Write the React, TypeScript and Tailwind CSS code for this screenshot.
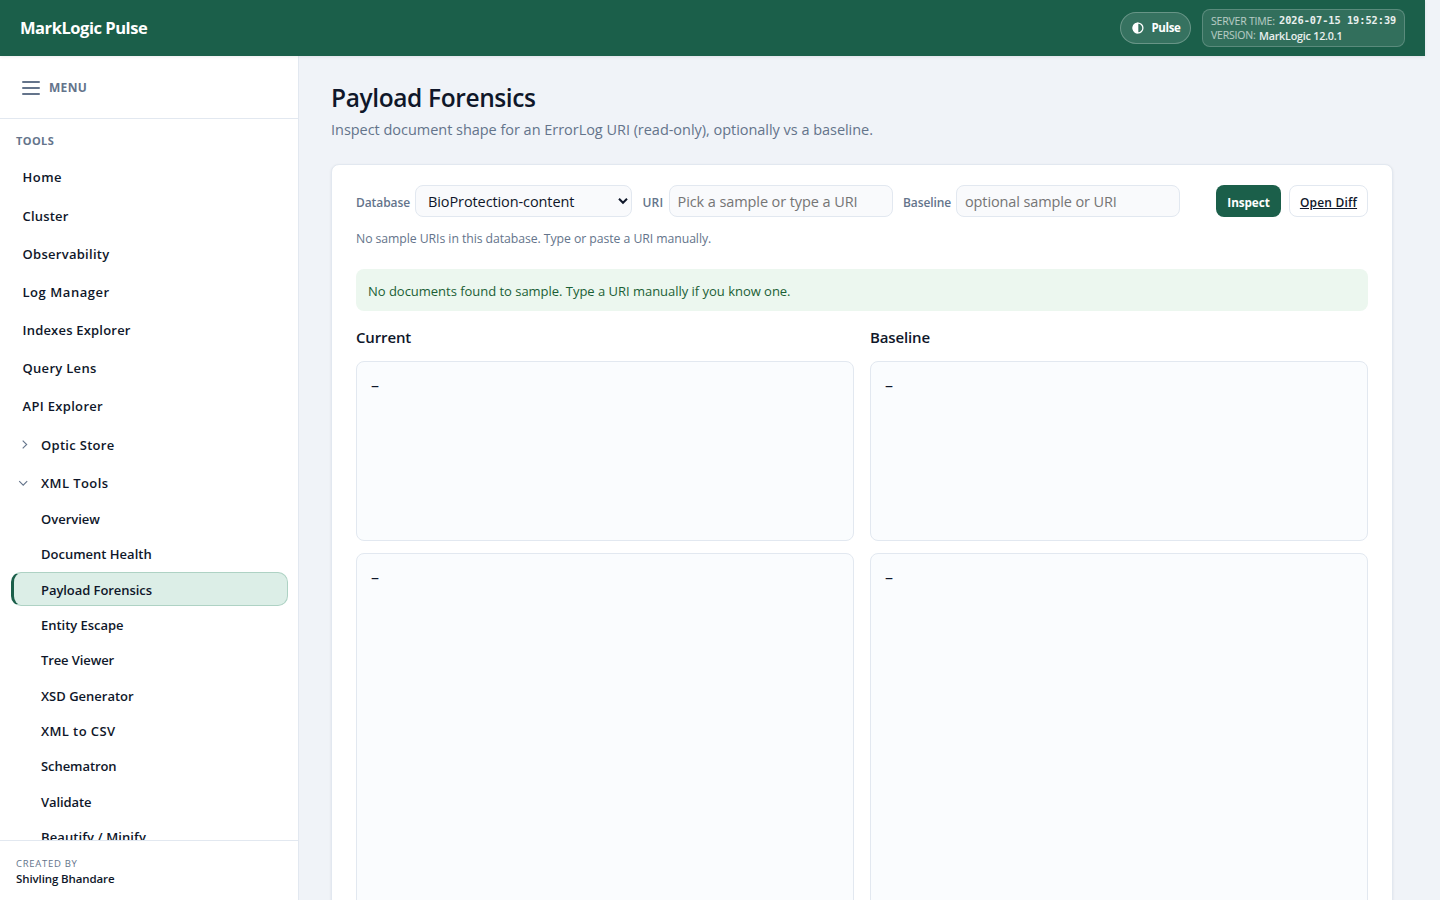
const topItems: [string, string][] = [
  ["Home", "tracking-[0.47px]"],
  ["Cluster", "tracking-[0.2px]"],
  ["Observability", "tracking-[0.28px]"],
  ["Log Manager", "tracking-[0.55px]"],
  ["Indexes Explorer", "tracking-[0.2px]"],
  ["Query Lens", "tracking-[0.3px]"],
  ["API Explorer", "tracking-[0.32px]"],
];

const xmlTools: [string, string][] = [
  ["Overview", ""],
  ["Document Health", ""],
  ["Payload Forensics", "tracking-[-0.06px]"],
  ["Entity Escape", "tracking-[-0.03px]"],
  ["Tree Viewer", "tracking-[-0.11px]"],
  ["XSD Generator", ""],
  ["XML to CSV", "tracking-[0.4px]"],
  ["Schematron", "tracking-[-0.07px]"],
  ["Validate", "tracking-[-0.08px]"],
  ["Beautify / Minify", "tracking-[0.1px]"],
];

function Header() {
  return (
    <header className="relative z-10 flex h-14 w-[1425px] shrink-0 items-center justify-between bg-[#1b5f4a] px-5 text-white shadow-[0_1px_3px_rgba(15,23,42,0.08)]">
      <div className="text-[16.5px] font-bold tracking-[-0.46px]">MarkLogic Pulse</div>
      <div className="flex items-center gap-[11px]">
        <button className="flex h-8 w-[71px] items-center rounded-full border border-white/25 bg-white/12 pl-[11px] text-[11.5px] font-bold tracking-[-0.38px]">
          <svg width="12" height="12" viewBox="0 0 12 12" className="mr-[7.5px] shrink-0">
            <circle cx="6" cy="6" r="4.9" fill="none" stroke="white" strokeWidth="1.3" />
            <path d="M6.3 0.5H6a5.5 5.5 0 0 0 0 11h.3z" fill="white" />
          </svg>
          Pulse
        </button>
        <div className="flex h-[38px] w-[203px] flex-col justify-center rounded-lg border border-white/20 bg-white/10 pl-2 whitespace-nowrap">
          <div className="flex h-[15px] items-center gap-[3px]">
            <span className="w-[65px] pt-px text-[10.5px] tracking-[-0.2px] text-white/65">SERVER TIME:</span>
            <span className="font-['DejaVu_Sans_Mono',monospace] text-[10.25px] font-bold text-white/90">2026-07-15 19:52:39</span>
          </div>
          <div className="flex h-[14px] items-center gap-[3px]">
            <span className="w-[45px] pt-px text-[10.5px] tracking-[-0.2px] text-white/65">VERSION:</span>
            <span className="pt-0.5 text-[10.75px] font-semibold tracking-[-0.22px] text-white/90">MarkLogic 12.0.1</span>
          </div>
        </div>
      </div>
    </header>
  );
}

function Chevron({ open }: { open?: boolean }) {
  return (
    <svg width="10" height="10" viewBox="0 0 10 10" fill="none" stroke="#64748b" strokeWidth="1.1" className={open ? "mr-[13px] -ml-px mb-px" : "mr-3 mb-[3px]"}>
      <path d={open ? "M1.2 3.2l4 4 4-4" : "M3.7 1.6l4 3.9-4 3.9"} />
    </svg>
  );
}

function Sidebar() {
  return (
    <aside className="flex w-[299px] shrink-0 flex-col border-r border-[#e2e8f0] bg-white">
      <div className="flex h-[63px] shrink-0 items-center border-b border-[#e2e8f0] pl-[22px]">
        <div className="mt-px flex w-[18px] flex-col gap-1">
          <span className="h-0.5 rounded-full bg-[#64748b]" />
          <span className="h-0.5 rounded-full bg-[#64748b]" />
          <span className="h-0.5 rounded-full bg-[#64748b]" />
        </div>
        <span className="ml-[9px] pt-px text-[12px] font-bold tracking-[0.3px] text-[#64748b]">MENU</span>
      </div>
      <nav className="min-h-0 flex-1 overflow-hidden text-[13px] font-semibold">
        <div className="mt-[14px] h-4 pl-4 text-[11px] leading-4 font-bold tracking-[0.4px] text-[#64748b]">TOOLS</div>
        <div className="mt-[10px]">
          {topItems.map(([label, tracking]) => (
            <a key={label} className={"flex h-[38.2px] items-center pl-[22.5px] " + tracking}>{label}</a>
          ))}
          <a className="flex h-[38.2px] items-center pl-[19px] tracking-[0.3px]"><Chevron />Optic Store</a>
          <a className="flex h-[38.2px] items-center pl-[19px] tracking-[0.42px]"><Chevron open />XML Tools</a>
        </div>
        <div className="-mt-[1.5px] px-[10.5px]">
          {xmlTools.map(([label, tracking]) => (
            <a
              key={label}
              className={
                "mb-[1.33px] flex h-[34px] items-center rounded-[10px] border pt-[3px] " +
                (label === "Payload Forensics"
                  ? "border-l-[3px] border-[#aed2c4] border-l-[#1b5f4a] bg-[#dceee7] pl-[27.5px] "
                  : "border-transparent pl-[29.5px] ") +
                tracking
              }
            >
              {label}
            </a>
          ))}
        </div>
      </nav>
      <div className="h-[60px] shrink-0 border-t border-[#e2e8f0] pt-[15px] pl-4">
        <div className="text-[9.5px] leading-[15px] tracking-[0.72px] text-[#64748b]">CREATED BY</div>
        <div className="text-[11.5px] leading-4 font-semibold tracking-[-0.11px]">Shivling Bhandare</div>
      </div>
    </aside>
  );
}

function Column({ title }: { title: string }) {
  return (
    <section className="min-w-0 flex-1">
      <h2 className="h-[22px] text-[15px] leading-[20px] font-semibold tracking-[-0.14px]">{title}</h2>
      <pre className="mt-3 h-[180px] rounded-lg border border-[#e2e8f0] bg-[#fafcfe] px-[14px] pt-[11px] font-['Open_Sans',sans-serif] text-[16px] leading-6">–</pre>
      <pre className="mt-3 h-[420px] rounded-lg border border-[#e2e8f0] bg-[#fafcfe] px-[14px] pt-[11px] font-['Open_Sans',sans-serif] text-[16px] leading-6">–</pre>
    </section>
  );
}

export default function App() {
  return (
    <div className="flex h-[900px] flex-col overflow-hidden bg-[#f0f3f8] font-['Open_Sans',sans-serif] text-[#0f172a]">
      <Header />
      <div className="flex min-h-0 w-[1425px] flex-1">
        <Sidebar />
        <main className="min-w-0 flex-1 overflow-hidden px-8 pt-6">
          <h1 className="h-9 text-[24.5px] leading-[35px] font-semibold tracking-[-0.38px]">Payload Forensics</h1>
          <p className="h-6 text-[14.5px] leading-[27px] tracking-[-0.033px] text-[#64748b]">
            Inspect document shape for an ErrorLog URI (read-only), optionally vs a baseline.
          </p>
          <div className="mt-6 h-[900px] rounded-lg border border-[#e2e8f0] bg-white px-6 pt-5 shadow-[0_1px_3px_rgba(15,23,42,0.08)]">
            <div className="flex h-8 items-center text-[12px] font-semibold whitespace-nowrap">
              <label className="w-[59px] pt-[3px] tracking-[-0.08px] text-[#64748b]">Database</label>
              <div className="flex h-8 w-[217px] items-center justify-between rounded-lg border border-[#e2e8f0] bg-[#f9fafc] pr-[3px] pl-3 text-[14.5px] font-normal tracking-[-0.1px]">
                <span className="pt-px">BioProtection-content</span>
                <svg width="10" height="8" viewBox="0 0 10 8" fill="none" stroke="#0f172a" strokeWidth="2">
                  <path d="M1 1.8l4 4 4-4" />
                </svg>
              </div>
              <label className="ml-[10.5px] w-[26.5px] pt-[3px] tracking-[0.2px] text-[#64748b]">URI</label>
              <input
                placeholder="Pick a sample or type a URI"
                className="h-8 w-[224px] rounded-lg border border-[#e2e8f0] bg-[#f9fafc] pr-2 pl-[7.5px] text-[14.5px] font-normal tracking-[-0.09px] placeholder:text-[#757575]"
              />
              <label className="ml-[10px] w-[53px] pt-[3px] tracking-[-0.09px] text-[#64748b]">Baseline</label>
              <input
                placeholder="optional sample or URI"
                className="h-8 w-[224px] rounded-lg border border-[#e2e8f0] bg-[#f9fafc] px-2 text-[14.5px] font-normal tracking-[-0.12px] placeholder:text-[#757575]"
              />
              <button className="ml-auto h-8 w-[65px] rounded-lg bg-[#1b5f4a] pt-[3px] text-[11.75px] font-bold tracking-[-0.1px] text-white">Inspect</button>
              <a className="ml-2 flex h-8 w-[79px] items-center justify-center rounded-lg border border-[#e2e8f0] bg-white pt-[3px] tracking-[0.2px] underline">
                Open Diff
              </a>
            </div>
            <p className="mt-3 h-5 text-[12.25px] leading-5 tracking-[-0.065px] text-[#64748b]">
              No sample URIs in this database. Type or paste a URI manually.
            </p>
            <div className="mt-5 flex h-[42px] items-center rounded-lg bg-[#ecf7ef] px-3 pt-[3px] text-[13px] tracking-[-0.025px] text-[#1b5f35]">
              No documents found to sample. Type a URI manually if you know one.
            </div>
            <div className="mt-4 flex gap-4">
              <Column title="Current" />
              <Column title="Baseline" />
            </div>
          </div>
        </main>
      </div>
    </div>
  );
}
